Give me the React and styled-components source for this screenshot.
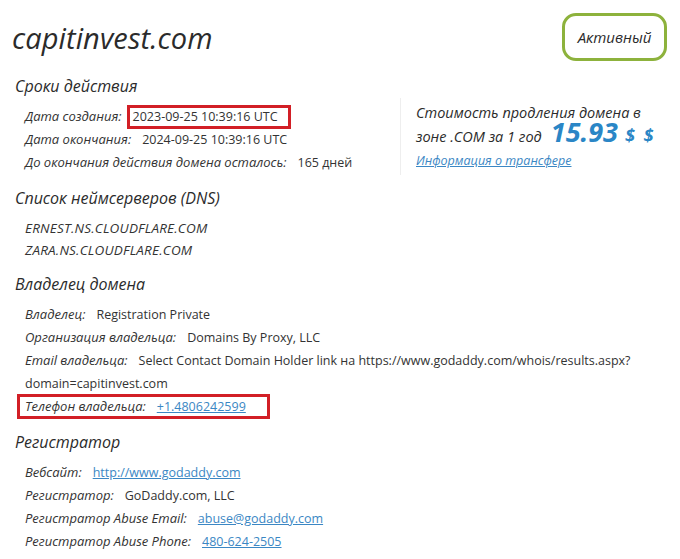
import React from "react";
import styled, { createGlobalStyle } from "styled-components";

const GlobalStyle = createGlobalStyle`
  body {
    margin: 0;
    background: #ffffff;
    font-family: "Open Sans", "Noto Sans", sans-serif;
    color: #333333;
  }
`;

const Page = styled.div`
  width: 680px;
  padding: 13px 13px 0 12px;
  box-sizing: border-box;
`;

const Header = styled.div`
  display: flex;
  justify-content: space-between;
  align-items: center;
  height: 48px;
`;

const Title = styled.h1`
  margin: 0;
  font-size: 29px;
  font-style: italic;
  font-weight: 500;
  color: #2b2b2b;
  letter-spacing: 0.1px;
`;

const Badge = styled.div`
  width: 105px;
  height: 48px;
  box-sizing: border-box;
  border: 3px solid #8db23c;
  border-radius: 14px;
  display: flex;
  align-items: center;
  justify-content: center;
  font-size: 15px;
  font-style: italic;
  font-weight: 500;
  color: #2b2b2b;
`;

const Section = styled.section`
  margin-top: ${(p) => p.$top || 11.5}px;
  padding-left: 3px;
`;

const Heading = styled.h2`
  margin: 0 0 7px;
  height: 24px;
  line-height: 24px;
  font-size: 16px;
  font-style: italic;
  font-weight: 500;
  color: #2b2b2b;
`;

const Split = styled.div`
  display: flex;
  align-items: flex-start;
  height: 69px;
`;

const Rows = styled.div`
  padding-left: 10px;
  width: ${(p) => p.$width || 375}px;
`;

const Row = styled.div`
  height: 23px;
  line-height: 23px;
  font-size: 12.5px;
  white-space: nowrap;
  ${(p) =>
    p.$marked &&
    `
    width: fit-content;
    border: 3px solid #d21f26;
    height: 19px;
    line-height: 19px;
    margin: -1px 0 -1px -8px;
    padding: 0 21px 0 5px;
  `}
`;

const Label = styled.span`
  font-style: italic;
  font-size: 13px;
  margin-right: 11px;
`;

const Value = styled.span`
  ${(p) =>
    p.$marked &&
    `
    display: inline-block;
    border: 3px solid #d21f26;
    line-height: 18px;
    padding: 0 10px 0 3px;
    margin-left: -6px;
  `}
`;

const Link = styled.a`
  color: #3b87c4;
  text-decoration: underline;
`;

const Wrap = styled.div`
  font-size: 12.5px;
  line-height: 23px;
`;

const Server = styled.div`
  height: 22px;
  line-height: 22px;
  font-size: 13.5px;
  font-style: italic;
  letter-spacing: 0.2px;
`;

const PriceBox = styled.div`
  margin-top: -7px;
  border-left: 1px solid #eeeeee;
  padding: 3px 0 2px 15px;
  font-style: italic;
  font-weight: 500;
  font-size: 14.5px;
  line-height: 24px;
  color: #2b2b2b;
  white-space: nowrap;
`;

const Price = styled.span`
  font-size: 27px;
  line-height: 0;
  font-weight: 700;
  color: #2a86c6;
  margin-left: 9px;
`;

const Currency = styled.span`
  font-size: 18px;
  line-height: 0;
  font-weight: 700;
  color: #2a86c6;
  margin-left: 7px;
  letter-spacing: 2px;
`;

const TransferLink = styled.a`
  display: block;
  font-size: 12.5px;
  font-weight: 400;
  color: #3b87c4;
  text-decoration: underline;
`;

export default function App() {
  return (
    <Page>
      <GlobalStyle />
      <Header>
        <Title>capitinvest.com</Title>
        <Badge>Активный</Badge>
      </Header>

      <Section $top={13}>
        <Heading>Сроки действия</Heading>
        <Split>
          <Rows>
            <Row>
              <Label>Дата создания:</Label>
              <Value $marked>2023-09-25 10:39:16 UTC</Value>
            </Row>
            <Row>
              <Label>Дата окончания:</Label>
              <Value>2024-09-25 10:39:16 UTC</Value>
            </Row>
            <Row>
              <Label>До окончания действия домена осталось:</Label>
              <Value>165 дней</Value>
            </Row>
          </Rows>
          <PriceBox>
            <div>Стоимость продления домена в</div>
            <div>
              зоне .COM за 1 год<Price>15.93</Price>
              <Currency>$ $</Currency>
            </div>
            <TransferLink href="#">Информация о трансфере</TransferLink>
          </PriceBox>
        </Split>
      </Section>

      <Section>
        <Heading>Список неймсерверов (DNS)</Heading>
        <Rows>
          <Server>ERNEST.NS.CLOUDFLARE.COM</Server>
          <Server>ZARA.NS.CLOUDFLARE.COM</Server>
        </Rows>
      </Section>

      <Section>
        <Heading>Владелец домена</Heading>
        <Rows $width={640}>
          <Row>
            <Label>Владелец:</Label>
            <Value>Registration Private</Value>
          </Row>
          <Row>
            <Label>Организация владельца:</Label>
            <Value>Domains By Proxy, LLC</Value>
          </Row>
          <Wrap>
            <Label>Email владельца:</Label>
            <Value>
              Select Contact Domain Holder link на
              https://www.godaddy.com/whois/results.aspx?
              <br />
              domain=capitinvest.com
            </Value>
          </Wrap>
          <Row $marked>
            <Label>Телефон владельца:</Label>
            <Link href="#">+1.4806242599</Link>
          </Row>
        </Rows>
      </Section>

      <Section>
        <Heading>Регистратор</Heading>
        <Rows>
          <Row>
            <Label>Вебсайт:</Label>
            <Link href="#">http://www.godaddy.com</Link>
          </Row>
          <Row>
            <Label>Регистратор:</Label>
            <Value>GoDaddy.com, LLC</Value>
          </Row>
          <Row>
            <Label>Регистратор Abuse Email:</Label>
            <Link href="#">abuse@godaddy.com</Link>
          </Row>
          <Row>
            <Label>Регистратор Abuse Phone:</Label>
            <Link href="#">480-624-2505</Link>
          </Row>
        </Rows>
      </Section>
    </Page>
  );
}
